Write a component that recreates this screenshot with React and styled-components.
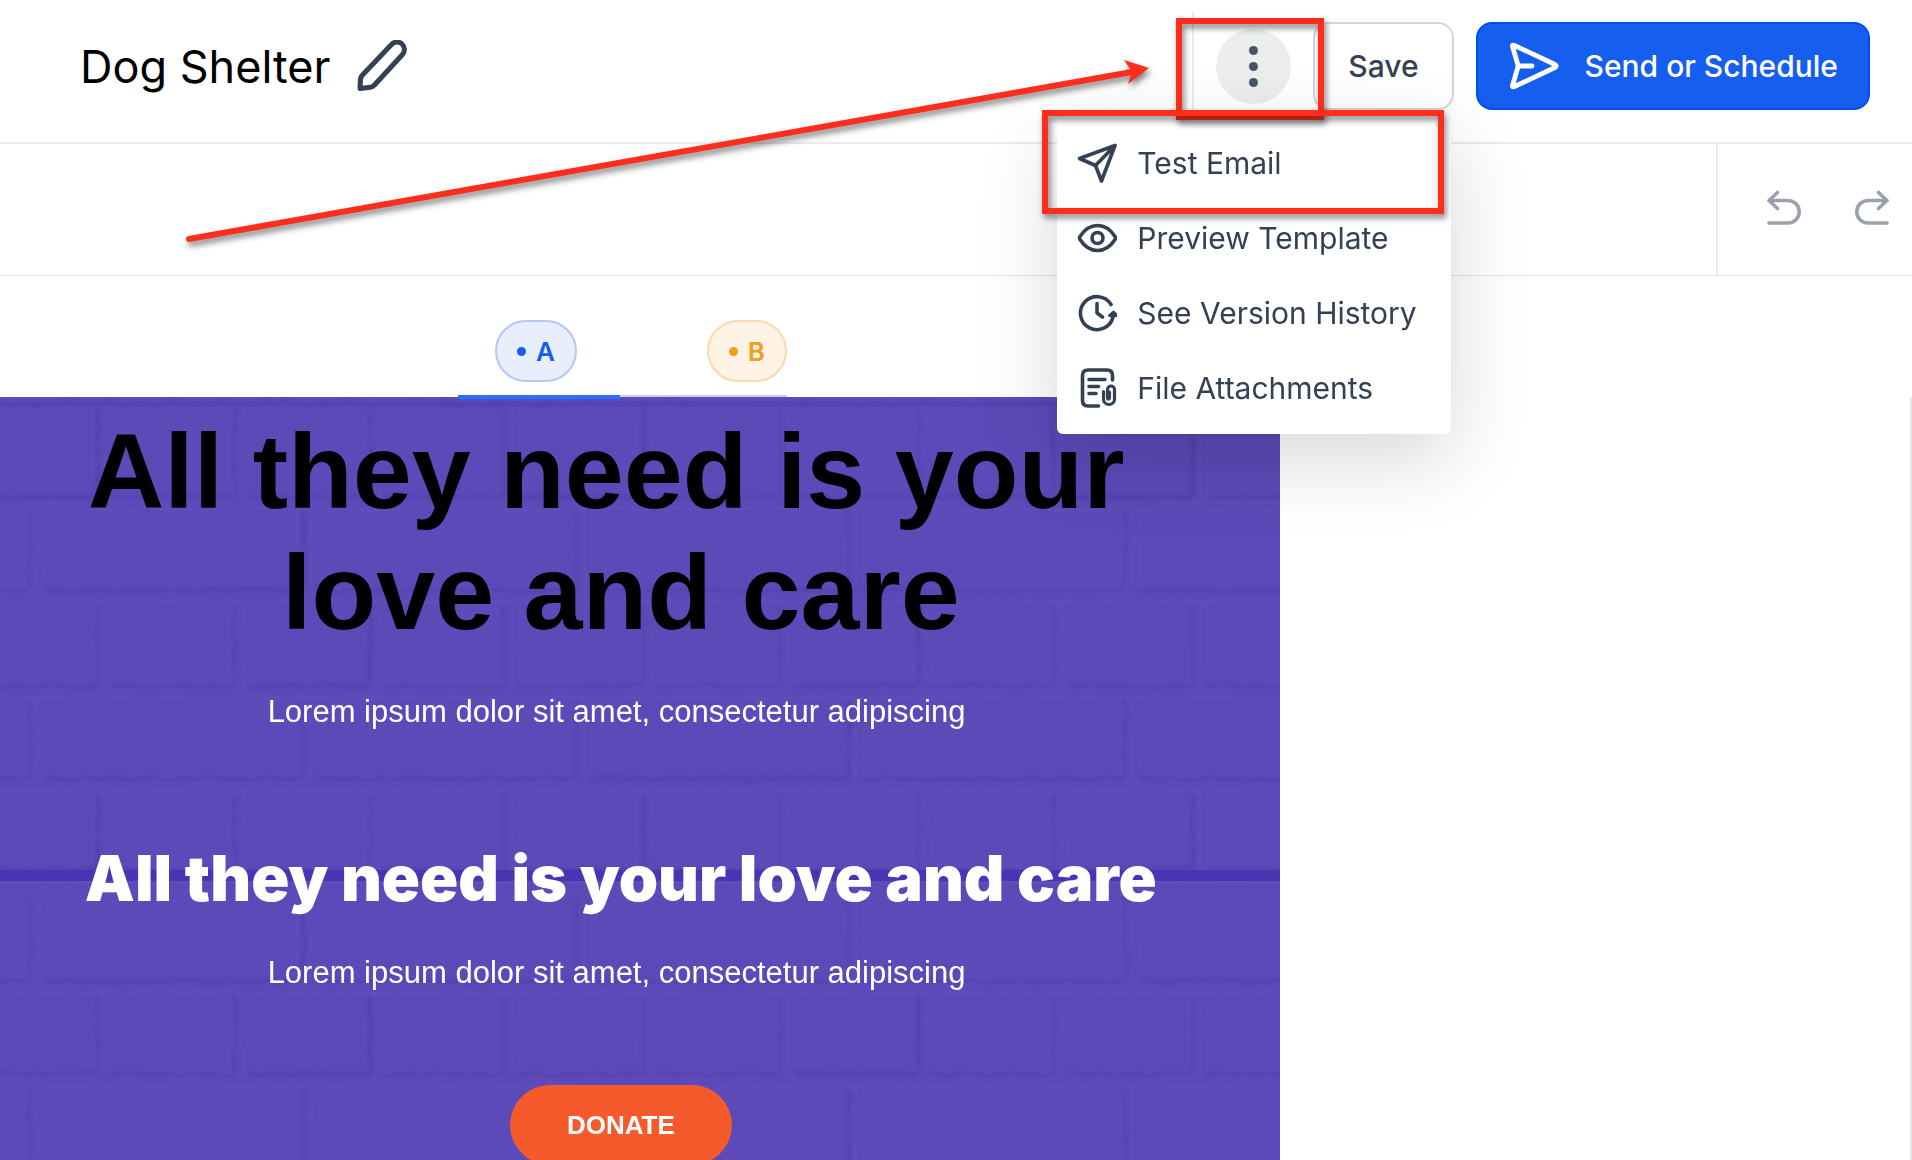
import React from 'react'
import styled, { createGlobalStyle } from 'styled-components'

const GlobalStyle = createGlobalStyle`
  *{
    box-sizing:border-box;
  }
  body{
    margin:0;
    background-color:#fff;
    font-family:Inter, 'Liberation Sans', sans-serif;
    color:#344054;
  }
  button{
    font-family:inherit;
    cursor:pointer;
  }
`;

// offset brick courses of the wall behind the email
const COURSES = [
  { top: 406, bottom: 497, wide: false },
  { top: 509, bottom: 590, wide: true },
  { top: 604, bottom: 686, wide: false },
  { top: 700, bottom: 779, wide: true },
  { top: 794, bottom: 870, wide: false },
  { top: 900, bottom: 982, wide: true },
  { top: 996, bottom: 1075, wide: false },
  { top: 1090, bottom: 1170, wide: true },
]
const NARROW = [98, 235, 371, 505, 644, 781, 919, 1055, 1194, 1330]
const WIDE = [30, 304, 577, 850, 1126, 1400]

const Wall = () => (
  <WallSvg viewBox="0 397 1281 780" preserveAspectRatio="xMinYMin slice" aria-hidden="true">
    <defs>
      <filter id="soft" x="-5%" y="-5%" width="110%" height="110%">
        <feTurbulence type="fractalNoise" baseFrequency="0.05" numOctaves="2" seed="4" result="n" />
        <feDisplacementMap in="SourceGraphic" in2="n" xChannelSelector="R" yChannelSelector="G" scale="5" />
        <feGaussianBlur stdDeviation="1.2" />
      </filter>
    </defs>
    <g filter="url(#soft)" fill="none">
      <path d="M0 404H1281" stroke="#5240ab" strokeWidth="5" opacity="0.7" />
      {COURSES.map((c, row) => (
        <g key={c.top}>
          <path d={`M0 ${c.bottom + 12}H1281`} stroke="#614ebc" strokeWidth="4" opacity="0.7" />
          {(c.wide ? WIDE : NARROW).map((x, i, list) => {
            const start = i ? list[i - 1] : -60
            const heavy = (i * 3 + row) % 4 === 0
            return (
              <g key={x}>
                <path d={`M${x + 8} ${c.top}V${c.bottom}`} stroke="#614ebc" strokeWidth="3" opacity="0.5" />
                <path d={`M${x} ${c.top}V${c.bottom - 6}Q${x} ${c.bottom} ${x - 6} ${c.bottom}`} stroke="#503fa9" strokeWidth={heavy ? 4 : 2} opacity="0.6" />
                <path d={`M${start + 14} ${c.bottom}H${x - 5}`} stroke="#4f3eab" strokeWidth={heavy ? 5 : 3} opacity="0.55" />
              </g>
            )
          })}
        </g>
      ))}
    </g>
    <path d="M0 876H1281" stroke="#4934b4" strokeWidth="11" />
  </WallSvg>
)

const PencilIcon = () => (
  <svg width="52" height="52" viewBox="0 0 52 52" fill="none" stroke="#344054" strokeWidth="5" strokeLinejoin="round">
    <path d="M4 48.500L4.500 39Q5 36.500 6.500 35L35.500 4.500A6.500 6.500 0 0 1 46.500 14.500L18.500 45Q16.500 47 14.500 47.200Z" />
  </svg>
)

const SendIcon = () => (
  <svg width="52" height="52" viewBox="0 0 52 52" fill="none" stroke="#fff" strokeWidth="4.800" strokeLinecap="round" strokeLinejoin="round">
    <path d="M10 26H24M4.500 6.500Q4 4.500 6.500 5.500L47 24.500Q49.500 26 47 27.500L6.500 46.500Q4 47.500 4.500 45.500L9.500 28.500Q10.500 26 9.500 23.500Z" />
  </svg>
)

const PlaneIcon = () => (
  <MenuSvg viewBox="0 0 40 40">
    <path d="M38 2.500L2.500 15.500L18.500 22.500L24.500 38ZM38 2.500L18.500 22.500" />
  </MenuSvg>
)

const EyeIcon = () => (
  <MenuSvg viewBox="0 0 40 40">
    <path d="M3 18.500Q10 7.500 20.500 7.500T38 18.500Q39 20 38 21.500Q31 32.500 20.500 32.500T3 21.500Q2 20 3 18.500Z" />
    <circle cx="20.500" cy="20" r="5.500" />
  </MenuSvg>
)

const HistoryIcon = () => (
  <MenuSvg viewBox="0 0 40 40">
    <path d="M34 11.500A16.500 16.500 0 1 0 36 24M20 10.500V20L25.500 24" />
    <path d="M36.500 19L32.500 22.500H40Z" fill="#344054" strokeWidth="2.800" />
  </MenuSvg>
)

const FileIcon = () => (
  <MenuSvg viewBox="0 0 40 40">
    <path d="M35.500 12V7.500Q35.500 2 30 2H11Q5.500 2 5.500 7.500V32.500Q5.500 38 11 38H21.500M12 11.500H28M12 18.500H21.500M12 25.500H19" />
    <path d="M26.500 23.500V31A5.500 5.500 0 0 0 37.500 31V21.500A3.500 3.500 0 0 0 30.500 21.500V30Q31 32.500 32.500 30V24" strokeWidth="3.200" />
  </MenuSvg>
)

const UndoIcon = () => (
  <svg width="36" height="36" viewBox="0 0 36 36" fill="none" stroke="#9aa1ac" strokeWidth="3.600" strokeLinecap="round" strokeLinejoin="round">
    <path d="M11.500 2.500L3 10.500L11.500 18.500M3 10.500H22A11.200 11.200 0 0 1 22 33H3" />
  </svg>
)

const menuItems = [
  { label: 'Test Email', icon: <PlaneIcon /> },
  { label: 'Preview Template', icon: <EyeIcon /> },
  { label: 'See Version History', icon: <HistoryIcon /> },
  { label: 'File Attachments', icon: <FileIcon /> },
]

const App = () => {
  return (
    <Page>
      <GlobalStyle />

      <Header>
        <Title>Dog Shelter</Title>
        <IconButton aria-label="Rename"><PencilIcon /></IconButton>

        <Actions>
          <MoreHolder>
            <MoreButton aria-label="More actions">
              <Dot /><Dot /><Dot />
            </MoreButton>
            <Menu>
              {menuItems.map(item => (
                <MenuItem key={item.label}>{item.icon}{item.label}</MenuItem>
              ))}
            </Menu>
            <MoreMark />
            <MenuMark />
          </MoreHolder>
          <SaveButton>Save</SaveButton>
          <SendButton><SendIcon />Send or Schedule</SendButton>
        </Actions>
      </Header>

      <Toolbar>
        <HistoryGroup>
          <IconButton aria-label="Undo"><UndoIcon /></IconButton>
          <IconButton aria-label="Redo"><Flip><UndoIcon /></Flip></IconButton>
        </HistoryGroup>
      </Toolbar>

      <Versions>
        <Version $active><Pill $tone="blue">A</Pill></Version>
        <Version><Pill $tone="orange">B</Pill></Version>
      </Versions>

      <Workspace>
        <Email>
          <Wall />
          <EmailBody>
            <BigHeading>All they need is your&nbsp;<br />love and care</BigHeading>
            <Lorem>Lorem ipsum dolor sit amet, consectetur adipiscing&nbsp;</Lorem>
            <Heading>All they need is your love and care</Heading>
            <Lorem>Lorem ipsum dolor sit amet, consectetur adipiscing&nbsp;</Lorem>
            <Donate href="#donate">DONATE</Donate>
          </EmailBody>
        </Email>
      </Workspace>

      <Arrow viewBox="0 -10 980 200" aria-hidden="true">
        <path d="M5 178L948 11" stroke="#ff2d1c" strokeWidth="6" strokeLinecap="round" />
        <path d="M965 7L940 -1L948 11L944 23Z" fill="#ff2d1c" />
      </Arrow>
    </Page>
  )
}


const Page = styled.div`
  position:relative;
  height:100vh;
  overflow:hidden;
  display:flex;
  flex-direction:column;
`;

const Header = styled.header`
  display:flex;
  align-items:center;
  gap:26px;
  height:144px;
  padding:0 42px 10px 80px;
  border-bottom:2px solid #eaebf0;
`;

const Title = styled.h1`
  margin:0;
  padding-top:2px;
  font-size:45px;
  line-height:56px;
  font-weight:400;
  color:#000;
`;

const IconButton = styled.button`
  display:flex;
  padding:0;
  border:0;
  background:none;
`;

const Actions = styled.div`
  display:flex;
  align-items:center;
  gap:22px;
  margin-left:auto;
`;

const MoreHolder = styled.div`
  position:relative;
  display:flex;
  align-items:center;
  height:110px;
  padding-left:22px;
  border-left:2px solid #eaebf0;
`;

const MoreButton = styled.button`
  display:flex;
  flex-direction:column;
  align-items:center;
  justify-content:center;
  gap:7px;
  width:75px;
  height:75px;
  border:0;
  border-radius:50%;
  background-color:#eceeed;
`;

const Dot = styled.span`
  width:9px;
  height:9px;
  border-radius:50%;
  background-color:#475467;
`;

const Mark = styled.span`
  position:absolute;
  z-index:4;
  border:6px solid #ff2d1c;
  filter:drop-shadow(2px 4px 3px rgba(0, 0, 0, 0.5));
  pointer-events:none;
`;

const MoreMark = styled(Mark)`
  left:-18px;
  top:7px;
  width:148px;
  height:102px;
`;

const MenuMark = styled(Mark)`
  left:-152px;
  top:99px;
  width:402px;
  height:104px;
`;

const Menu = styled.div`
  position:absolute;
  left:-137px;
  top:105px;
  z-index:3;
  width:394px;
  padding:9px 0;
  border-radius:6px;
  background-color:#fff;
  box-shadow:0 24px 80px rgba(0, 0, 0, 0.16);
`;

const MenuItem = styled.button`
  display:flex;
  align-items:center;
  gap:20px;
  width:100%;
  height:75px;
  padding:0 20px;
  border:0;
  background:none;
  font-size:30px;
  color:#344054;
  white-space:nowrap;
`;

const MenuSvg = styled.svg`
  width:40px;
  height:40px;
  flex:none;
  fill:none;
  stroke:#344054;
  stroke-width:3.6px;
  stroke-linecap:round;
  stroke-linejoin:round;
`;

const SaveButton = styled.button`
  height:88px;
  padding:0 33px;
  border:2px solid #d0d5dd;
  border-radius:16px;
  background-color:#fff;
  color:#344054;
  font-size:30px;
  font-weight:500;
`;

const SendButton = styled(SaveButton)`
  display:flex;
  align-items:center;
  gap:25px;
  padding:0 30px;
  border-color:#004eeb;
  background-color:#155eef;
  color:#fff;
  white-space:nowrap;
`;

const Toolbar = styled.div`
  display:flex;
  justify-content:flex-end;
  height:132px;
  border-bottom:1px solid #dfe0e2;
`;

const HistoryGroup = styled.div`
  display:flex;
  align-items:center;
  gap:52px;
  width:196px;
  padding:0 0 4px 48px;
  border-left:2px solid #eaebf0;
`;

const Flip = styled.span`
  display:flex;
  transform:scaleX(-1);
`;

const Versions = styled.div`
  display:flex;
  height:121px;
  padding-left:458px;
`;

const Version = styled.div`
  position:relative;
  z-index:1;
  display:flex;
  justify-content:${props => props.$active ? 'center' : 'flex-end'};
  align-items:flex-start;
  width:${props => props.$active ? '162px' : '167px'};
  height:${props => props.$active ? '123px' : '121px'};
  padding-top:44px;
  padding-right:${props => props.$active ? '6px' : '0'};
  border-bottom:${props => props.$active ? '4px solid #2970ff' : '2px solid #d0d0d0'};
`;

const Pill = styled.button`
  display:flex;
  align-items:center;
  gap:10px;
  height:62px;
  padding:0 20px;
  border:2px solid ${props => props.$tone === 'blue' ? '#b2c8fb' : '#fbd9a8'};
  border-radius:31px;
  background-color:${props => props.$tone === 'blue' ? '#e8eefc' : '#fff3e6'};
  color:${props => props.$tone === 'blue' ? '#155eef' : '#f29d1f'};
  font-size:26px;
  font-weight:600;

  &::before{
    content:'';
    width:9px;
    height:9px;
    border-radius:50%;
    background-color:currentColor;
  }
`;

const Workspace = styled.main`
  flex:1;
  display:flex;
  min-height:0;
  border-right:2px solid #e6e6e6;
`;

const Email = styled.section`
  position:relative;
  width:67%;
  overflow:hidden;
  background-color:#5c4ab8;
`;

const WallSvg = styled.svg`
  position:absolute;
  inset:0;
  width:100%;
  height:100%;
`;

const EmailBody = styled.div`
  position:relative;
  display:flex;
  flex-direction:column;
  align-items:center;
  padding:14px 38px 0 0;
  font-family:'Liberation Sans', Arial, sans-serif;
  text-align:center;
  white-space:nowrap;
`;

const BigHeading = styled.h2`
  margin:0 0 39px;
  font-size:106px;
  line-height:121px;
  font-weight:700;
  color:#000;
`;

const Lorem = styled.p`
  margin:0;
  font-size:31px;
  line-height:40px;
  color:#fff;
`;

const Heading = styled.h3`
  margin:102px 0 31px;
  font-family:Inter, sans-serif;
  font-size:63px;
  line-height:88px;
  font-weight:900;
  color:#fff;
`;

const Donate = styled.a`
  display:flex;
  align-items:center;
  height:80px;
  margin-top:92px;
  padding:0 57px;
  border-radius:40px;
  background-color:#f65a2c;
  color:#fff;
  font-size:26px;
  font-weight:700;
  text-decoration:none;
`;

const Arrow = styled.svg`
  position:absolute;
  left:184px;
  top:51px;
  z-index:5;
  width:980px;
  height:200px;
  fill:none;
  filter:drop-shadow(2px 4px 3px rgba(0, 0, 0, 0.5));
  pointer-events:none;
`;


export default App
